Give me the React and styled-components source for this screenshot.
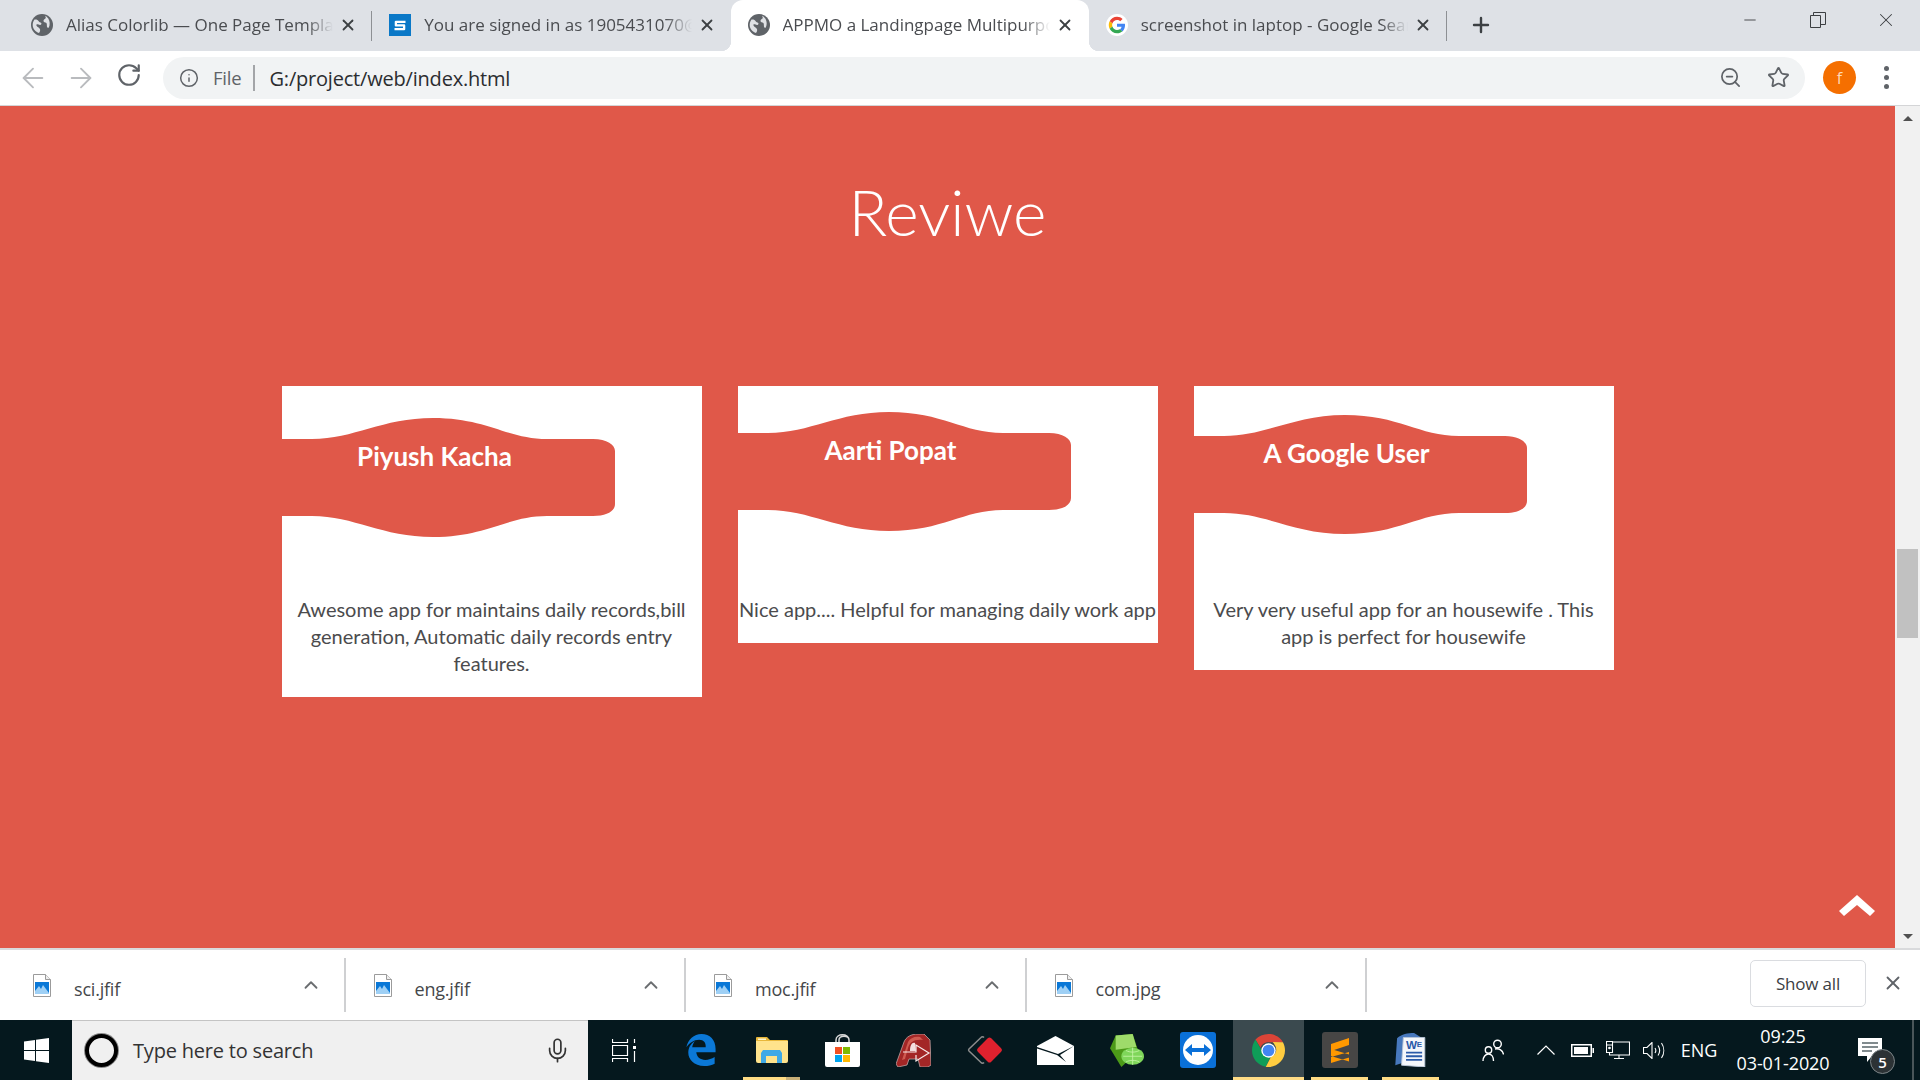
import React from 'react'
import styled, { createGlobalStyle } from 'styled-components'
import { ArrowLeft, ArrowRight, RotateCw, Info, ZoomOut, Star, ChevronUp, X, Plus, Minus, Mic } from 'lucide-react'

const RED = '#e05849'

const GlobalStyle = createGlobalStyle`
  html, body { margin: 0; padding: 0; overflow: hidden; background: #fff; }
  * { box-sizing: border-box; }
`

const Screen = styled.div`
  width: 1920px;
  height: 1080px;
  display: flex;
  flex-direction: column;
  overflow: hidden;
  font-family: "Open Sans", "Noto Sans", sans-serif;
`

/* tab strip */
const TabStrip = styled.div`
  height: 51px;
  flex: none;
  background: #dee1e6;
  display: flex;
  align-items: stretch;
  padding-left: 14px;
`
const TabBox = styled.div`
  position: relative;
  width: 358.25px;
  flex: none;
  display: flex;
  align-items: center;
  padding: 0 15px 2px 17px;
  background: ${p => (p.$active ? '#fff' : 'transparent')};
  border-radius: ${p => (p.$active ? '12px 12px 0 0' : '0')};
  ${p => p.$separator && `
    &::after {
      content: '';
      position: absolute;
      right: 0;
      top: 11px;
      height: 30px;
      width: 1px;
      background: #8d9094;
    }
  `}
  ${p => p.$active && `
    &::before {
      content: '';
      position: absolute;
      left: -10px;
      right: -10px;
      bottom: 0;
      height: 10px;
      background:
        radial-gradient(circle at 0 0, transparent 10px, #fff 10.5px) left bottom / 10px 10px no-repeat,
        radial-gradient(circle at 100% 0, transparent 10px, #fff 10.5px) right bottom / 10px 10px no-repeat;
    }
  `}
`
const Favicon = styled.span`
  width: 22px;
  height: 22px;
  flex: none;
  display: flex;
  align-items: center;
  justify-content: center;
`
const TabTitle = styled.span`
  margin-left: 13px;
  flex: 1;
  min-width: 0;
  white-space: nowrap;
  overflow: hidden;
  font-size: 17px;
  color: #4a4c50;
  -webkit-mask-image: linear-gradient(to right, #000 90%, transparent 100%);
  mask-image: linear-gradient(to right, #000 90%, transparent 100%);
`
const TabClose = styled(X)`
  flex: none;
  margin-left: 6px;
  color: #3c4043;
`
const NewTab = styled(Plus)`
  flex: none;
  margin: 13px 0 0 22px;
  color: #3c4043;
`
const WindowControls = styled.div`
  margin-left: auto;
  display: flex;
  align-items: flex-start;
  color: #3c3f42;
`
const WindowButton = styled.div`
  width: 68px;
  height: 40px;
  display: flex;
  align-items: center;
  justify-content: center;
`

/* address bar */
const Toolbar = styled.div`
  height: 55px;
  flex: none;
  background: #fff;
  border-bottom: 1px solid #d4d5d7;
  display: flex;
  align-items: center;
  padding-bottom: 1px;
`
const NavButton = styled.div`
  width: 48px;
  flex: none;
  display: flex;
  justify-content: center;
  color: ${p => (p.$enabled ? '#5f6368' : '#b9bbbe')};
`
const NavGroup = styled.div`
  display: flex;
  padding-left: 9px;
  width: 163px;
  flex: none;
`
const Omnibox = styled.div`
  width: 1642px;
  height: 42px;
  flex: none;
  border-radius: 21px;
  background: #f1f3f4;
  display: flex;
  align-items: center;
  padding: 0 15px 0 16px;
`
const SiteInfo = styled.span`
  display: flex;
  align-items: center;
  gap: 14px;
  color: #5f6368;
  font-size: 18.5px;
  letter-spacing: -0.2px;
  padding-right: 12px;
  border-right: 2px solid #a3a5a8;
  line-height: 26px;
`
const Url = styled.span`
  margin-left: 14px;
  padding-top: 1px;
  font-size: 20px;
  letter-spacing: -0.2px;
  color: #2b2d30;
`
const OmniIcons = styled.div`
  margin-left: auto;
  display: flex;
  align-items: center;
  gap: 25px;
  color: #5f6368;
`
const Avatar = styled.div`
  width: 33px;
  height: 33px;
  margin-left: 18px;
  flex: none;
  border-radius: 50%;
  background: #f56f00;
  color: #ffd9b8;
  font-size: 16px;
  display: flex;
  align-items: center;
  justify-content: center;
`
const MenuDots = styled.div`
  margin-left: 28px;
  display: flex;
  flex-direction: column;
  gap: 4px;
  & > span {
    width: 5px;
    height: 5px;
    border-radius: 50%;
    background: #5f6368;
  }
`

/* page */
const Viewport = styled.div`
  flex: 1;
  min-height: 0;
  display: flex;
`
const Page = styled.main`
  position: relative;
  flex: 1;
  background: ${RED};
  display: flex;
  flex-direction: column;
  align-items: center;
`
const Heading = styled.h1`
  margin: 62px 0 0;
  font-family: Lato, sans-serif;
  font-weight: 300;
  font-size: 64px;
  line-height: 88px;
  color: #fff;
`
const CardRow = styled.div`
  margin-top: 130px;
  display: flex;
  align-items: flex-start;
  gap: 36px;
`
const Card = styled.article`
  width: 420px;
  background: #fff;
  padding-bottom: 20px;
`
const CardHead = styled.div`
  height: 210px;
  padding-top: ${p => p.$top}px;
`
const Ribbon = styled.div`
  position: relative;
  width: 333px;
  height: 120px;
`
const RibbonShape = styled.svg`
  display: block;
`
const Name = styled.h3`
  position: absolute;
  left: 0;
  top: 20px;
  width: 306px;
  margin: 0;
  text-align: center;
  font-family: Lato, sans-serif;
  font-weight: 700;
  font-size: 26px;
  line-height: 36px;
  color: #fff;
`
const Review = styled.p`
  margin: 0;
  padding: 0 ${p => p.$inset || 1}px;
  text-align: center;
  font-family: Lato, sans-serif;
  font-size: 20px;
  line-height: 27px;
  color: #4b4b4d;
`
const BackToTop = styled.svg`
  position: absolute;
  right: 20px;
  bottom: 31px;
`
const Scrollbar = styled.div`
  width: 25px;
  flex: none;
  background: #f1f1f1;
  display: flex;
  flex-direction: column;
  align-items: center;
  padding: 10px 0 9px;
`
const ScrollArrow = styled.div`
  width: 0;
  height: 0;
  border-left: 5.5px solid transparent;
  border-right: 5.5px solid transparent;
  ${p => (p.$down ? 'border-top: 5px solid #505050;' : 'border-bottom: 5px solid #505050;')}
`
const ScrollThumb = styled.div`
  width: 21px;
  height: 89px;
  margin: 428px 0 auto;
  background: #c1c1c1;
`

/* downloads */
const DownloadBar = styled.div`
  height: 72px;
  flex: none;
  background: #fff;
  border-top: 2px solid #d9dadc;
  display: flex;
  align-items: flex-start;
  padding: 8px 0 0 5px;
`
const DownloadItem = styled.div`
  width: 340.5px;
  height: 54px;
  flex: none;
  display: flex;
  align-items: center;
  border-right: 2px solid #cfd0d2;
  padding: 0 22px 0 28px;
`
const FileName = styled.span`
  margin-left: 23px;
  flex: 1;
  padding-top: 8px;
  font-size: 18px;
  letter-spacing: -0.2px;
  color: #45474a;
`
const ShowAll = styled.button`
  margin-left: auto;
  width: 116px;
  height: 47px;
  margin-top: 2px;
  background: #fff;
  border: 1px solid #dadce0;
  border-radius: 5px;
  font-family: inherit;
  font-size: 17px;
  letter-spacing: -0.2px;
  color: #3c4043;
`
const BarClose = styled(X)`
  margin: 14px 16px 0 16px;
  color: #5f6368;
`

/* taskbar */
const Taskbar = styled.footer`
  height: 60px;
  flex: none;
  background: #05181e;
  display: flex;
  align-items: stretch;
`
const StartButton = styled.div`
  width: 72px;
  flex: none;
  display: flex;
  align-items: center;
  justify-content: center;
`
const SearchBox = styled.div`
  width: 516px;
  flex: none;
  background: #f0f0f0;
  border-top: 1px solid #c4c4c4;
  display: flex;
  align-items: center;
  padding: 0 17px 0 13px;
  color: #333;
`
const Cortana = styled.div`
  width: 33px;
  height: 33px;
  flex: none;
  border-radius: 50%;
  border: 4px solid #000;
  box-shadow: 0 0 0 1px #8a8a8a;
  background: #f0f0f0;
`
const SearchText = styled.span`
  margin-left: 15px;
  flex: 1;
  font-size: 20px;
  letter-spacing: -0.2px;
  color: #333;
`
const TaskView = styled.div`
  width: 77px;
  flex: none;
  display: flex;
  align-items: center;
  justify-content: center;
  padding-right: 4px;
`
const TaskButton = styled.div`
  position: relative;
  width: 71px;
  flex: none;
  display: flex;
  align-items: center;
  justify-content: center;
  background: ${p => (p.$current ? '#3b4a4f' : 'transparent')};
  ${p => p.$running && `
    &::after {
      content: '';
      position: absolute;
      bottom: 0;
      left: ${p.$current ? '0' : '7px'};
      right: ${p.$current ? '0' : '7px'};
      height: 3px;
      background: ${p.$stacked ? 'linear-gradient(to right, #ffdc85 75%, #c9b078 75%)' : '#ffdc85'};
    }
  `}
`
const Tray = styled.div`
  margin-left: auto;
  display: flex;
  align-items: stretch;
  color: #fff;
`
const TrayCell = styled.div`
  position: relative;
  width: ${p => p.$w}px;
  margin-right: ${p => p.$gap || 0}px;
  flex: none;
  display: flex;
  flex-direction: column;
  align-items: center;
  justify-content: center;
  font-size: 18px;
  letter-spacing: -0.1px;
  color: #fff;
`
const ClockTime = styled.span`
  line-height: 27px;
`
const Badge = styled.span`
  position: absolute;
  left: 30px;
  top: 29px;
  width: 25px;
  height: 25px;
  border-radius: 50%;
  background: #2c3235;
  border: 1px solid #7d8588;
  font-size: 15px;
  font-weight: 600;
  display: flex;
  align-items: center;
  justify-content: center;
`
const ShowDesktop = styled.div`
  width: 2px;
  margin: 0 6px 0 12px;
  background: #4a5559;
`

const Globe = () => (
  <svg width="22" height="22" viewBox="0 0 22 22">
    <circle cx="11" cy="11" r="11" fill="#5f6368" />
    <path d="M3.500 5.500c1.800-.3 3.500.2 4 1.500s2 1.200 2.700 2-.2 2-1.200 1.900-2.600-.9-3.400-.5.300 2 1.200 2.700 2.400 1.500 2.400 3c0 1-.4 2-1.200 2.800C4.500 18 1.800 15 1.700 11c0-2 .7-4 1.800-5.500zM14 1.800c.6 1 1.200 2 .4 2.800s-1.900 1-1.900 2.400 1.800 1.500 2.600 1.800 .8 1.800.8 3.200.9 2.200 1.900 1.600c1.300-2.500 1.200-6.400-.5-9-.9-1.300-2.100-2.300-3.300-2.800z" fill="#dfe1e5" />
  </svg>
)

const SharePointIcon = () => (
  <svg width="24" height="24" viewBox="0 0 24 24">
    <rect width="24" height="24" fill="#0a78c7" />
    <path d="M18 8.500H7.500V12.500H16.500V16.500H6" fill="none" stroke="#fff" strokeWidth="2.500" strokeLinejoin="round" />
  </svg>
)

const GoogleIcon = () => (
  <svg width="22" height="22" viewBox="0 0 48 48">
    <circle cx="24" cy="24" r="24" fill="#fff" />
    <path fill="#ea4335" d="M24 13c3 0 5.300 1.100 7 2.700l5.200-5C33 7.600 28.900 6 24 6 17 6 10.900 10 8 15.900l6 4.700C15.500 16.100 19.400 13 24 13z" />
    <path fill="#4285f4" d="M41.500 24.500c0-1.400-.1-2.500-.4-3.500H24v6.700h10c-.4 2.400-1.800 4.400-4 5.800l5.800 4.500c3.500-3.200 5.700-7.900 5.700-13.500z" />
    <path fill="#fbbc05" d="M14 27.400c-.4-1.100-.6-2.200-.6-3.400s.2-2.300.6-3.400l-6-4.700C6.700 18.400 6 21.100 6 24s.7 5.600 2 8.100z" />
    <path fill="#34a853" d="M24 42c4.900 0 8.900-1.600 11.800-4.400L30 33c-1.500 1.100-3.500 1.900-6 1.900-4.600 0-8.500-3.100-10-7.500l-6 4.700C10.900 38 17 42 24 42z" />
  </svg>
)

const ImageFile = () => (
  <svg width="18" height="23" viewBox="0 0 18 23">
    <path d="M.5.500h12l5 5v17H.5z" fill="#fff" stroke="#9b9b9b" />
    <path d="M12.500.500v5h5" fill="#eee" stroke="#9b9b9b" />
    <rect x="2" y="8" width="14" height="12" fill="#0a78d7" />
    <path d="M2 17l4-5 2 3 2-4 6 8v1H2z" fill="#9fd0f5" />
  </svg>
)

const WindowsLogo = () => (
  <svg width="25" height="25" viewBox="0 0 25 25" fill="#fff">
    <path d="M0 3.500L11 2v10H0zM12 1.800L25 0v12H12zM0 13h11v10L0 21.500zM12 13h13v12l-13-1.800z" />
  </svg>
)

const TaskViewIcon = () => (
  <svg width="25" height="23" viewBox="0 0 25 23" fill="none" stroke="#fff" strokeWidth="1.200">
    <path d="M.5 0v3.500h15V0M.5 6.500h15v10h-15zM.5 23v-3.500h15V23M22.500 0v4M22.500 12v11" />
    <rect x="21" y="7" width="3" height="3" fill="#fff" stroke="none" />
  </svg>
)

const EdgeIcon = () => (
  <svg width="30" height="32" viewBox="0 0 31 34">
    <path fill="#0b78d7" d="M16 0C25 0 31 6 31 16v3.500H10.500c.5 5.500 4.500 8 9.500 8 3.500 0 7-1 10-3v7c-3 1.800-7 2.500-11 2.500C8 34 2 27 2 20c0-5 2-9 7-12.500-1.500 2-2.500 4-2.800 6.500h14.300c.2-5-2-8-7-8C8 6 3 9.500 0 14 1.500 6 8 0 16 0z" />
  </svg>
)

const ExplorerIcon = () => (
  <svg width="32" height="26" viewBox="0 0 32 26">
    <path d="M0 1a1 1 0 0 1 1-1h10l3 3h17a1 1 0 0 1 1 1v4H0z" fill="#e8b73a" />
    <path d="M0 4h32v20a2 2 0 0 1-2 2H2a2 2 0 0 1-2-2z" fill="#ffe38c" />
    <path d="M5 26v-10l2-3h17l2 3v10h-5v-7H10v7z" fill="#3fa9e6" />
    <rect x="2" y="1.500" width="8" height="1.500" fill="#fff6d0" />
  </svg>
)

const StoreIcon = () => (
  <svg width="35" height="33" viewBox="0 0 35 33">
    <path d="M11 9V6c0-7 13-7 13 0v3M14 9V6c0-5 10-5 10 0" fill="none" stroke="#d8d8d8" strokeWidth="1.500" />
    <path d="M0 8h35v23a2 2 0 0 1-2 2H2a2 2 0 0 1-2-2z" fill="#fff" />
    <rect x="10" y="13" width="7" height="7" fill="#f25022" />
    <rect x="18" y="13" width="7" height="7" fill="#7fba00" />
    <rect x="10" y="21" width="7" height="7" fill="#00a4ef" />
    <rect x="18" y="21" width="7" height="7" fill="#ffb900" />
  </svg>
)

const AutocadIcon = () => (
  <svg width="35" height="33" viewBox="0 0 35 33">
    <path d="M0 30L8 8C10 3 15 0 22 0h6l6 6 1 25-3 2h-8l-2-8H13l-2 6-9 2z" fill="#a32626" stroke="#bfa2a2" strokeWidth=".8" />
    <path d="M6 26L12 8c2-4 7-6 12-5l3 3C18 5 14 8 12 14l-3 11z" fill="#cf5a50" />
    <path d="M14 17c0-6 2-9 5-8l1 8z" fill="#f3dede" />
    <path d="M7 18h13V11l13 8-13 8v-6" fill="none" stroke="#f7e9e9" strokeWidth="1.200" />
  </svg>
)

const AnyDeskIcon = () => (
  <svg width="36" height="28" viewBox="0 0 36 28">
    <path d="M14 1.500L2 13a1.500 1.500 0 0 0 0 2l12 11.500a2 2 0 0 0 3 0M14 1.500a2 2 0 0 1 3 0" fill="none" stroke="#8c8c8c" strokeWidth="1.500" />
    <rect x="13" y="4.500" width="19" height="19" rx="2.500" transform="rotate(45 22.500 14)" fill="#e0212e" />
  </svg>
)

const MailIcon = () => (
  <svg width="37" height="29" viewBox="0 0 37 29">
    <path d="M0 10L18.500 0 37 10v19H0z" fill="#fff" />
    <path d="M0 11l21 7 16-8-14 9 6 7-9-7L0 12.500z" fill="#05181e" />
  </svg>
)

const GreenIcon = () => (
  <svg width="34" height="33" viewBox="0 0 36 46" preserveAspectRatio="none">
    <path d="M6 2l18-2 6 24-18 22L0 20z" fill="#4c9a18" />
    <path d="M6 2l18-2 4 18-22 4z" fill="#9edb6a" />
    <circle cx="24" cy="31" r="12" fill="#7fd65a" />
    <path d="M14 31h20M24 19v24M17 23c4 3 10 3 14 0M17 39c4-3 10-3 14 0" stroke="#c8f5a8" fill="none" />
  </svg>
)

const TeamViewerIcon = () => (
  <svg width="36" height="36" viewBox="0 0 36 36">
    <rect width="36" height="36" rx="3" fill="#0a70d8" />
    <circle cx="18" cy="18" r="15" fill="#fff" />
    <path d="M5 18l7-6v4h12v-4l7 6-7 6v-4H12v4z" fill="#0a70d8" />
  </svg>
)

const ChromeIcon = () => (
  <svg width="33" height="33" viewBox="0 0 48 48">
    <path fill="#db4437" d="M24 0c9 0 17 5 21 12H24c-6 0-10.500 3.500-11.500 8.500L5 8C9.500 3 16.500 0 24 0z" />
    <path fill="#0f9d58" d="M5 8l10.500 18c2 4.500 7 7 12 6L20 47.500C8.500 45.500 0 36 0 24c0-6 2-11.500 5-16z" />
    <path fill="#ffcd40" d="M45 12c2 3.500 3 7.700 3 12 0 13-10.500 24-24 24h-4l8-15.500c2.500-.8 4.500-2.500 6-5 2-3.500 1.500-8-1-11.500-.5-1.500-1.500-3-3-4.500z" />
    <circle cx="24" cy="24" r="10.500" fill="#fff" />
    <circle cx="24" cy="24" r="8.500" fill="#4285f4" />
  </svg>
)

const SublimeIcon = () => (
  <svg width="36" height="36" viewBox="0 0 36 36">
    <rect width="36" height="36" rx="3" fill="#474645" />
    <path d="M27 6v7L9 19v-7zM9 17l18 5.500v7L9 24zM27 20.500v-.5L9 25v6l18-5.500z" fill="#ff9800" />
  </svg>
)

const WordIcon = () => (
  <svg width="35" height="34" viewBox="0 0 36 38">
    <path d="M3 6c5-5 12-6 19-6l8 5v24C20 29 10 33 1 36z" fill="#4778bd" />
    <path d="M10 5h24v33l-26-2z" fill="#f4f7fb" stroke="#b8c6d8" />
    <text x="13" y="18" fontFamily="Liberation Sans, sans-serif" fontWeight="700" fontSize="13" fill="#2a5aa8">W</text>
    <text x="25" y="16" fontFamily="Liberation Sans, sans-serif" fontWeight="700" fontSize="9" fill="#2a5aa8">E</text>
    <path d="M13 22h18M13 26h18M13 30h18" stroke="#2a5aa8" strokeWidth="2" />
  </svg>
)

const PeopleIcon = () => (
  <svg width="22" height="22" viewBox="0 0 22 22" fill="none" stroke="#fff" strokeWidth="1.400">
    <circle cx="15.500" cy="5" r="3.800" />
    <circle cx="6.500" cy="11" r="3.200" />
    <path d="M1 22c0-4 2.500-7 5.500-7s5 3 5 7M13 10c4-1 8 1.500 8.500 5.500" />
  </svg>
)

const TrayCaret = () => (
  <svg width="18" height="10" viewBox="0 0 18 10" fill="none" stroke="#fff" strokeWidth="1.200">
    <path d="M.5 9.500L9 1l8.500 8.500" />
  </svg>
)

const BatteryIcon = () => (
  <svg width="23" height="13" viewBox="0 0 23 13">
    <rect x=".75" y=".75" width="19.500" height="11.500" fill="none" stroke="#fff" strokeWidth="1.500" />
    <rect x="3" y="3" width="14" height="7" fill="#fff" />
    <rect x="21.500" y="4" width="1.500" height="5" fill="#fff" />
  </svg>
)

const NetworkIcon = () => (
  <svg width="24" height="18" viewBox="0 0 24 18" fill="none" stroke="#fff" strokeWidth="1.100">
    <path d="M.5.500h6v11h-6zM6.500 1H23.500v13H3.500v-2.500M13 14v3.500M8 17.500h10M.5 4h6" />
    <circle cx="3.500" cy="7" r=".8" fill="#fff" />
  </svg>
)

const SpeakerIcon = () => (
  <svg width="22" height="17" viewBox="0 0 22 17" fill="none" stroke="#fff" strokeWidth="1.100">
    <path d="M.5 5.500h3.500l5-5v16l-5-5H.5zM12 6c1 1.500 1 3.500 0 5M15 3.500c2 3 2 7 0 10M18.500 1c3 4.500 3 10.500 0 15" />
  </svg>
)

const NotificationIcon = () => (
  <svg width="24" height="24" viewBox="0 0 24 24">
    <path d="M0 0h24v18H14l-5 6v-6H0z" fill="#fff" />
    <path d="M4 5h16M4 9h16M4 13h10" stroke="#05181e" strokeWidth="1.200" />
  </svg>
)

const tabs = [
  { title: 'Alias Colorlib — One Page Template', icon: <Globe />, separator: true },
  { title: 'You are signed in as 1905431070@gmail', icon: <SharePointIcon /> },
  { title: 'APPMO a Landingpage Multipurpose', icon: <Globe />, active: true },
  { title: 'screenshot in laptop - Google Search', icon: <GoogleIcon />, separator: true },
]

const reviews = [
  { name: 'Piyush Kacha', top: 32, text: 'Awesome app for maintains daily records,bill generation, Automatic daily records entry features.' },
  { name: 'Aarti Popat', top: 26, text: 'Nice app.... Helpful for managing daily work app' },
  { name: 'A Google User', top: 29, inset: 14, text: 'Very very useful app for an housewife . This app is perfect for housewife' },
]

const downloads = ['sci.jfif', 'eng.jfif', 'moc.jfif', 'com.jpg']

const taskIcons = [
  { icon: <EdgeIcon /> },
  { icon: <ExplorerIcon />, running: true, stacked: true },
  { icon: <StoreIcon /> },
  { icon: <AutocadIcon /> },
  { icon: <AnyDeskIcon /> },
  { icon: <MailIcon /> },
  { icon: <GreenIcon /> },
  { icon: <TeamViewerIcon /> },
  { icon: <ChromeIcon />, running: true, current: true },
  { icon: <SublimeIcon />, running: true },
  { icon: <WordIcon />, running: true },
]

function ReviewCard({ name, top, inset, text }) {
  return (
    <Card>
      <CardHead $top={top}>
        <Ribbon>
          <RibbonShape width="333" height="120" viewBox="0 0 333 120">
            <path
              fill={RED}
              d="M0 21H30C72 21 100 0 151 0C205 0 225 21 265 21H311C325 21 333 27 333 33V86C333 93 325 98 311 98H265C225 98 205 119 151 119C100 119 72 98 30 98H0Z"
            />
          </RibbonShape>
          <Name>{name}</Name>
        </Ribbon>
      </CardHead>
      <Review $inset={inset}>{text}</Review>
    </Card>
  )
}

export default function App() {
  return (
    <Screen>
      <GlobalStyle />
      <TabStrip>
        {tabs.map(tab => (
          <TabBox key={tab.title} $active={tab.active} $separator={tab.separator}>
            <Favicon>{tab.icon}</Favicon>
            <TabTitle>{tab.title}</TabTitle>
            <TabClose size={18} strokeWidth={2.4} />
          </TabBox>
        ))}
        <NewTab size={24} strokeWidth={2.4} />
        <WindowControls>
          <WindowButton><Minus size={18} strokeWidth={1.2} /></WindowButton>
          <WindowButton>
            <svg width="16" height="16" viewBox="0 0 16 16" fill="none" stroke="currentColor">
              <path d="M.5 3.500h10v12H.5zM3.500 3.500v-3h12v12h-5" />
            </svg>
          </WindowButton>
          <WindowButton><X size={22} strokeWidth={1.1} /></WindowButton>
        </WindowControls>
      </TabStrip>

      <Toolbar>
        <NavGroup>
          <NavButton><ArrowLeft size={32} strokeWidth={1.4} /></NavButton>
          <NavButton><ArrowRight size={32} strokeWidth={1.4} /></NavButton>
          <NavButton $enabled><RotateCw size={26} strokeWidth={2} /></NavButton>
        </NavGroup>
        <Omnibox>
          <SiteInfo><Info size={20} strokeWidth={1.8} />File</SiteInfo>
          <Url>G:/project/web/index.html</Url>
          <OmniIcons>
            <ZoomOut size={23} strokeWidth={1.8} />
            <Star size={23} strokeWidth={1.9} />
          </OmniIcons>
        </Omnibox>
        <Avatar>f</Avatar>
        <MenuDots><span /><span /><span /></MenuDots>
      </Toolbar>

      <Viewport>
        <Page>
          <Heading>Reviwe</Heading>
          <CardRow>
            {reviews.map(review => <ReviewCard key={review.name} {...review} />)}
          </CardRow>
          <BackToTop width="36" height="22" viewBox="0 0 36 22">
            <path d="M0 16L18 0l18 16-5 5L18 10 5 21z" fill="#fff" />
          </BackToTop>
        </Page>
        <Scrollbar>
          <ScrollArrow />
          <ScrollThumb />
          <ScrollArrow $down />
        </Scrollbar>
      </Viewport>

      <DownloadBar>
        {downloads.map(file => (
          <DownloadItem key={file}>
            <ImageFile />
            <FileName>{file}</FileName>
            <ChevronUp size={22} strokeWidth={2} color="#6a6d70" />
          </DownloadItem>
        ))}
        <ShowAll>Show all</ShowAll>
        <BarClose size={22} strokeWidth={2} />
      </DownloadBar>

      <Taskbar>
        <StartButton><WindowsLogo /></StartButton>
        <SearchBox>
          <Cortana />
          <SearchText>Type here to search</SearchText>
          <Mic size={27} strokeWidth={1.5} />
        </SearchBox>
        <TaskView><TaskViewIcon /></TaskView>
        {taskIcons.map((task, i) => (
          <TaskButton key={i} $running={task.running} $current={task.current} $stacked={task.stacked}>{task.icon}</TaskButton>
        ))}
        <Tray>
          <TrayCell $w={46} $gap={12}><PeopleIcon /></TrayCell>
          <TrayCell $w={36}><TrayCaret /></TrayCell>
          <TrayCell $w={36}><BatteryIcon /></TrayCell>
          <TrayCell $w={36}><NetworkIcon /></TrayCell>
          <TrayCell $w={36}><SpeakerIcon /></TrayCell>
          <TrayCell $w={54}>ENG</TrayCell>
          <TrayCell $w={114}>
            <ClockTime>09:25</ClockTime>
            <ClockTime>03-01-2020</ClockTime>
          </TrayCell>
          <TrayCell $w={60}>
            <NotificationIcon />
            <Badge>5</Badge>
          </TrayCell>
          <ShowDesktop />
        </Tray>
      </Taskbar>
    </Screen>
  )
}
